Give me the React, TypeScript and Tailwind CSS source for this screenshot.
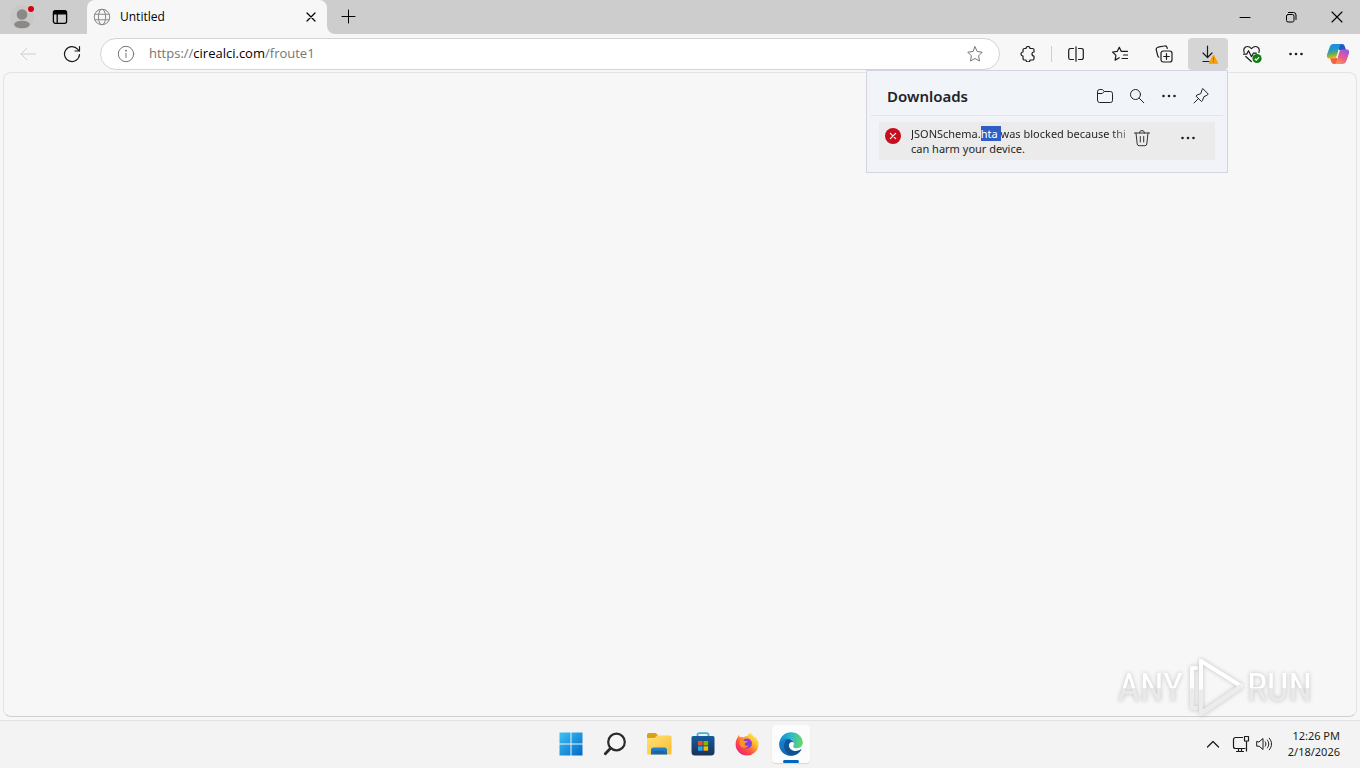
import React, { useState } from 'react';

type IconProps = { className?: string; children: React.ReactNode; box?: string; weight?: number };

function Icon({ className = 'size-4', children, box = '0 0 16 16', weight = 1 }: IconProps) {
  return (
    <svg
      aria-hidden="true"
      viewBox={box}
      className={`shrink-0 ${className}`}
      fill="none"
      stroke="currentColor"
      strokeWidth={weight}
      strokeLinecap="round"
      strokeLinejoin="round"
    >
      {children}
    </svg>
  );
}

function Dots({ className = 'size-4' }: { className?: string }) {
  return (
    <svg aria-hidden="true" viewBox="0 0 16 16" className={`shrink-0 ${className}`} fill="currentColor">
      <circle cx="2.5" cy="8" r="1.3" />
      <circle cx="8" cy="8" r="1.3" />
      <circle cx="13.5" cy="8" r="1.3" />
    </svg>
  );
}

function ToolButton({ label, children, className = 'w-10' }: { label: string; children: React.ReactNode; className?: string }) {
  return (
    <button type="button" aria-label={label} className={`flex h-8 shrink-0 items-center justify-center rounded ${className}`}>
      {children}
    </button>
  );
}

function TabStrip() {
  return (
    <header className="flex h-[34px] shrink-0 items-stretch bg-[#cdcdcd]">
      <button type="button" aria-label="Profile" className="flex w-11 items-center justify-center">
        <svg aria-hidden="true" viewBox="0 0 24 24" className="size-6">
          <circle cx="12" cy="12" r="12" fill="#c9c8c7" />
          <circle cx="12" cy="9.5" r="5.3" fill="#8b8887" />
          <ellipse cx="12" cy="19.5" rx="7.8" ry="3.8" fill="#8b8887" />
          <circle cx="21" cy="4" r="3.9" fill="#d6cccc" />
          <circle cx="21" cy="4" r="3" fill="#d3000f" />
        </svg>
      </button>
      <button type="button" aria-label="Tab actions" className="flex w-8 items-center justify-center text-black">
        <Icon className="size-4" weight={1.3}>
          <rect x="1.4" y="1.7" width="13.2" height="12.6" rx="2" />
          <path d="M2 2.5h12v2.3H2z" fill="currentColor" />
          <path d="M5.2 5v9" />
        </Icon>
      </button>
      <div className="flex w-[17px] items-end justify-end">
        <svg aria-hidden="true" viewBox="0 0 8 8" className="size-2">
          <path d="M8 0v8H0a8 8 0 0 0 8-8z" fill="#f7f7f7" />
        </svg>
      </div>
      <div className="-ml-1.5 flex w-60 items-center rounded-t-lg bg-[#f7f7f7] pl-1.5 pr-2">
        <Icon className="size-[18px] text-[#8a8a8a]" weight={0.9}>
          <circle cx="8" cy="8" r="6.9" />
          <ellipse cx="8" cy="8" rx="3.2" ry="6.9" />
          <path d="M1.7 5.5h12.6M1.7 10.5h12.6" />
        </Icon>
        <span className="ml-[9px] flex-1 font-['Open_Sans'] text-xs text-black">Untitled</span>
        <button type="button" aria-label="Close tab" className="flex size-4 items-center justify-center text-black">
          <Icon className="size-2.5" weight={1.2} box="0 0 10 10">
            <path d="M1 1l8 8M9 1l-8 8" />
          </Icon>
        </button>
      </div>
      <div className="flex items-end">
        <svg aria-hidden="true" viewBox="0 0 8 8" className="size-2">
          <path d="M0 0v8h8a8 8 0 0 1-8-8z" fill="#f7f7f7" />
        </svg>
      </div>
      <button type="button" aria-label="New tab" className="flex w-7 items-center justify-center text-black">
        <Icon className="size-4" weight={1}>
          <path d="M7.5 1v13M1 7.5h13" />
        </Icon>
      </button>
      <div className="flex-1" />
      <button type="button" aria-label="Minimize" className="flex w-[46px] items-center justify-center text-black">
        <Icon className="size-3" box="0 0 12 12">
          <path d="M1 6.5h10" />
        </Icon>
      </button>
      <button type="button" aria-label="Restore" className="flex w-[46px] items-center justify-center text-black">
        <Icon className="size-3" box="0 0 12 12">
          <rect x="1.5" y="3.5" width="7.5" height="7.5" rx="1.6" />
          <path d="M3.5 1.5h5a2.5 2.5 0 0 1 2.5 2.5v4.5" />
        </Icon>
      </button>
      <button type="button" aria-label="Close" className="flex w-[46px] items-center justify-center text-black">
        <Icon className="size-3" box="0 0 12 12" weight={1.1}>
          <path d="M1 1l10 10M11 1L1 11" />
        </Icon>
      </button>
    </header>
  );
}

function DownloadsPanel() {
  return (
    <section
      aria-label="Downloads"
      className="absolute right-0 top-full z-10 w-[362px] border border-[#d3d4e0] bg-[#f2f3f8] px-1 pb-3"
    >
      <div className="flex h-[45px] items-center border-b border-[#e3e5ec] bg-[#f1f4f8] pl-4 pr-1.5 pt-1.5 text-[#1f2329]">
        <h2 className="flex-1 text-[15px] font-semibold">Downloads</h2>
        <ToolButton label="Open downloads folder" className="w-8">
          <Icon className="size-[18px]" box="0 0 18 18">
            <path d="M1.5 4.5a2 2 0 0 1 2-2h2.8l2 2h6.2a2 2 0 0 1 2 2v7a2 2 0 0 1-2 2h-11a2 2 0 0 1-2-2zM1.5 6.5h4.8l2-2" />
          </Icon>
        </ToolButton>
        <ToolButton label="Search downloads" className="w-8">
          <Icon>
            <circle cx="6.5" cy="6.5" r="5" />
            <path d="M10.2 10.2l4.6 4.6" />
          </Icon>
        </ToolButton>
        <ToolButton label="More options" className="w-8">
          <Dots />
        </ToolButton>
        <ToolButton label="Pin downloads" className="w-8">
          <Icon>
            <path d="M10 .8l5.2 5.2-1 1.2-3.3 1.5-1.5 4-1 .8-5.4-5.4.8-1 4-1.5L9 2z" />
            <path d="M5.5 10.5L1 15" />
          </Icon>
        </ToolButton>
      </div>
      <div className="mx-2 mt-1.5 flex h-[38px] items-start bg-[#ebebeb] pl-1.5">
        <svg aria-hidden="true" viewBox="0 0 16 16" className="mt-1.5 size-4 shrink-0">
          <circle cx="8" cy="8" r="8" fill="#c50f1f" />
          <path d="M5.3 5.3l5.4 5.4M10.7 5.3l-5.4 5.4" stroke="#fff" strokeWidth="1.1" strokeLinecap="round" />
        </svg>
        <p className="ml-2.5 mt-1 w-[221px] whitespace-nowrap text-[11px] leading-[15px] text-[#1f1f1f]">
          <span className="block bg-linear-to-r from-[#1f1f1f] from-90% to-[#b0b0b0] bg-clip-text text-transparent">
            JSONSchema.<mark className="bg-[#2f5fc4] text-white">hta </mark>was blocked because thi
          </span>
          <span className="block">can harm your device.</span>
        </p>
        <button type="button" aria-label="Delete file" className="mt-1.5 flex h-5 w-5 items-center justify-center text-[#333]">
          <Icon className="size-[18px]" box="0 0 18 18">
            <path d="M1.5 4h15M6.5 4a2.5 2.5 0 0 1 5 0M3 4l1.2 11a2 2 0 0 0 2 1.7h5.6a2 2 0 0 0 2-1.7L15 4M7.3 7.5v5.5M10.7 7.5v5.5" />
          </Icon>
        </button>
        <button type="button" aria-label="More actions" className="ml-7 mt-2 flex size-4 items-center justify-center text-[#222]">
          <Dots className="size-4" />
        </button>
      </div>
    </section>
  );
}

function AddressField() {
  const [editing, setEditing] = useState(false);
  const [host, setHost] = useState({ scheme: 'https://', name: 'cirealci.com', path: '/froute1' });
  const [draft, setDraft] = useState('');

  function begin() {
    setDraft(host.scheme + host.name + host.path);
    setEditing(true);
  }

  function finish() {
    const parts = /^(https?:\/\/)?([^/]*)(.*)$/.exec(draft);
    if (parts) setHost({ scheme: parts[1] ?? 'https://', name: parts[2], path: parts[3] });
    setEditing(false);
  }

  return (
    <div className="relative ml-3.5 flex flex-1 items-center font-['Open_Sans'] text-[13px] text-[#757575]">
      <label htmlFor="address" className={editing ? 'invisible' : ''}>
        {host.scheme}
        <span className="text-black">{host.name}</span>
        {host.path}
      </label>
      <input
        id="address"
        type="text"
        value={editing ? draft : ''}
        onFocus={begin}
        onBlur={finish}
        onChange={(e) => setDraft(e.target.value)}
        className="absolute inset-0 w-full bg-transparent text-black outline-none"
      />
    </div>
  );
}

function Toolbar() {
  return (
    <div className="flex h-[38px] shrink-0 items-center gap-1 bg-[#f7f7f7] pl-2 pr-2.5 pt-0.5 text-[#1b1b1b]">
      <ToolButton label="Back">
        <Icon className="size-4 text-[#cfcfcf]">
          <path d="M15.5 8H1M7 2L1 8l6 6" />
        </Icon>
      </ToolButton>
      <ToolButton label="Refresh">
        <Icon className="size-[18px]" box="0 0 18 18" weight={1.2}>
          <path d="M16.5 9.5a7.5 7.5 0 1 1-1.7-5.2L16.3 6M16.5 1.5V6H12" />
        </Icon>
      </ToolButton>
      <div className="ml-1 flex h-8 flex-1 items-center rounded-full border border-[#d4d4d4] bg-white px-4">
        <button type="button" aria-label="View site information" className="text-[#757575]">
          <Icon className="size-[18px]" box="0 0 18 18">
            <circle cx="9" cy="9" r="7.7" />
            <path d="M9 8.2v4.3" />
            <circle cx="9" cy="5.7" r="0.5" fill="currentColor" />
          </Icon>
        </button>
        <AddressField />
        <button type="button" aria-label="Add to favorites" className="text-[#757575]">
          <Icon className="size-4">
            <path d="M8 .8l2.2 4.7 5 .7-3.600 3.600.9 5.200L8 12.500 3.500 15l.9-5.200L.8 6.200l5-.7z" />
          </Icon>
        </button>
      </div>
      <ToolButton label="Extensions" className="ml-1 w-10">
        <Icon weight={1.2}>
          <path d="M4.500 2.500H6a2 2 0 0 1 4 0h2.500a1.500 1.500 0 0 1 1.500 1.500v2a2 2 0 1 0 0 4v2.500a1.500 1.500 0 0 1-1.500 1.500H10a2 2 0 0 1-4 0H4.500A1.500 1.500 0 0 1 3 12.500V10a2 2 0 0 1 0-4V4a1.500 1.500 0 0 1 1.500-1.500" />
        </Icon>
      </ToolButton>
      <div className="-ml-px h-4 w-px bg-[#d0d0d0]" />
      <ToolButton label="Split screen" className="w-[39px]">
        <Icon weight={1.2}>
          <path d="M8 .8v14.400M5.500 2.500H2.500A1.800 1.800 0 0 0 .7 4.300v7.400a1.800 1.800 0 0 0 1.800 1.800h3M10.500 2.500h3a1.800 1.800 0 0 1 1.800 1.800v7.400a1.800 1.800 0 0 1-1.800 1.800h-3" />
        </Icon>
      </ToolButton>
      <ToolButton label="Favorites" className="ml-px w-10">
        <Icon weight={1.2}>
          <path d="M9.200 5.300h6.300M11.500 9h4M10 12.500h5.500M9.200 5.300L7.300 1.200 5.200 5.400.6 6l3.300 3.300-.8 4.800 4.200-2.300" />
        </Icon>
      </ToolButton>
      <ToolButton label="Collections">
        <Icon className="size-[18px]" box="0 0 18 18" weight={1.2}>
          <rect x="6" y="6" width="11" height="11" rx="2.2" />
          <path d="M11.500 8.700v5.600M8.700 11.500h5.600M3.800 12.200A2.500 2.500 0 0 1 2.700 10.500L1.300 5.200A2.500 2.500 0 0 1 3 2.200L9.200 1a2.500 2.500 0 0 1 3 1.800v.7" />
        </Icon>
      </ToolButton>
      <div className="relative">
        <ToolButton label="Downloads" className="w-10 bg-[#d5d5d5]">
          <svg aria-hidden="true" viewBox="0 0 20 20" className="size-5" fill="none">
            <path d="M9.500 2v11.500M5 9l4.500 4.500L14 9M5 17.500h6" stroke="#1b1b1b" strokeWidth="1.2" strokeLinecap="round" strokeLinejoin="round" />
            <path d="M15.500 11l4.300 8.300h-8.600z" fill="#f79f0a" stroke="#f79f0a" strokeLinejoin="round" />
            <path d="M15.500 13.500v3M15.500 17.700v.8" stroke="#a86b00" strokeWidth="1" />
          </svg>
        </ToolButton>
        <DownloadsPanel />
      </div>
      <ToolButton label="Browser essentials">
        <svg aria-hidden="true" viewBox="0 0 20 20" className="size-5" fill="none">
          <path
            d="M2.200 8.500C.8 5.600 2.500 2.500 5.500 2.500c1.700 0 2.700.8 4 2.200 1.300-1.400 2.300-2.200 4-2.200 3 0 4.700 3 3.400 6M1.500 10.200h3.200l1.800-3.500 3 6 1.800-3.500h3M3.800 12.500l5.500 5"
            stroke="#1b1b1b"
            strokeWidth="1.2"
            strokeLinecap="round"
            strokeLinejoin="round"
          />
          <circle cx="15" cy="14.500" r="4.600" fill="#107c10" />
          <path d="M12.800 14.700l1.500 1.400 2.800-3" stroke="#fff" strokeWidth="1.2" />
        </svg>
      </ToolButton>
      <ToolButton label="Settings and more">
        <Dots className="size-4" />
      </ToolButton>
      <ToolButton label="Copilot" className="-mr-1.5 w-9">
        <svg aria-hidden="true" viewBox="0 0 24 22" className="h-[22px] w-6">
          <defs>
            <linearGradient id="cpBlue" x1="0" y1="0" x2="0.2" y2="1">
              <stop offset="0" stopColor="#168ee8" />
              <stop offset="0.45" stopColor="#2796c5" />
              <stop offset="0.7" stopColor="#55ad65" />
              <stop offset="1" stopColor="#efb51c" />
            </linearGradient>
            <linearGradient id="cpPink" x1="0.7" y1="0" x2="0.2" y2="1">
              <stop offset="0" stopColor="#a055e0" />
              <stop offset="0.5" stopColor="#e65b91" />
              <stop offset="1" stopColor="#ff9850" />
            </linearGradient>
          </defs>
          <path d="M13 1h3c2 0 2.500 1.500 3 3l1 3h-7z" fill="#2259c8" />
          <path d="M11 21H8c-2 0-2.500-1.500-3-3l-1-3h7z" fill="#f0633e" />
          <path d="M7.500 1H16c-1.500 0-2 1-2.400 2.300L10.700 13c-.6 1.800-1.400 2.500-3 2.500H3.500C1 15.500.5 13.500 1.200 11L3.700 4C4.400 2 5.500 1 7.500 1z" fill="url(#cpBlue)" />
          <path d="M16.500 21H8c1.500 0 2-1 2.400-2.300L13.300 9c.6-1.800 1.400-2.500 3-2.500h4.200c2.500 0 3 2 2.300 4.500L20.300 18c-.7 2-1.800 3-3.800 3z" fill="url(#cpPink)" />
        </svg>
      </ToolButton>
    </div>
  );
}

function WatermarkWord({ children }: { children: string }) {
  return (
    <span className="bg-linear-to-b from-white from-50% to-[#e9e9e9] to-50% bg-clip-text text-transparent drop-shadow-[0_0_2px_#c0c0c0]">
      {children}
    </span>
  );
}

function Watermark() {
  return (
    <div className="pointer-events-none absolute bottom-12 right-12 z-10 flex items-center font-['Roboto_Condensed','Roboto',sans-serif] text-[38px] leading-[60px]">
      <WatermarkWord>ANY</WatermarkWord>
      <svg
        aria-hidden="true"
        viewBox="0 0 60 64"
        className="mx-0.5 h-16 w-[60px] drop-shadow-[0_0_2px_#c0c0c0]"
        fill="none"
        strokeLinecap="round"
        strokeLinejoin="round"
      >
        <path d="M11 12H7v22M16 5v30" stroke="#fdfdfd" strokeWidth="4" />
        <path d="M7 34v18h4M16 35v22" stroke="#ececec" strokeWidth="4" />
        <path d="M16 5l40 25" stroke="#ffffff" strokeWidth="4" />
        <path d="M55 31L17 57" stroke="#ececec" strokeWidth="5" />
      </svg>
      <WatermarkWord>RUN</WatermarkWord>
    </div>
  );
}

function TaskButton({ label, active = false, children }: { label: string; active?: boolean; children: React.ReactNode }) {
  return (
    <button
      type="button"
      aria-label={label}
      className={`relative flex h-[38px] w-[38px] items-center justify-center rounded ${active ? 'bg-[#fcfcfc] shadow-[0_1px_1px_#d8d8d8]' : ''}`}
    >
      {children}
      {active && <span className="absolute bottom-0 h-[3px] w-4 rounded-full bg-[#0067c0]" />}
    </button>
  );
}

function Taskbar() {
  return (
    <footer className="grid h-12 shrink-0 grid-cols-[1fr_auto_1fr] items-center border-t border-[#e2e2e2] bg-[#f3f3f3] pb-0.5">
      <div />
      <nav aria-label="Taskbar" className="flex gap-1.5 pl-0.5">
        <TaskButton label="Start">
          <svg aria-hidden="true" viewBox="0 0 24 24" className="size-6">
            <defs>
              <linearGradient id="win" x1="0" y1="0" x2="24" y2="24" gradientUnits="userSpaceOnUse">
                <stop offset="0" stopColor="#40c4f5" />
                <stop offset="1" stopColor="#0067c5" />
              </linearGradient>
            </defs>
            <path d="M.5 .5h11v11H.5zM12.500 .5h11v11h-11zM.5 12.500h11v11H.5zM12.500 12.500h11v11h-11z" fill="url(#win)" />
          </svg>
        </TaskButton>
        <TaskButton label="Search">
          <svg aria-hidden="true" viewBox="0 0 24 24" className="size-6" fill="none" stroke="#2b2b2b">
            <circle cx="13.500" cy="10" r="8.300" strokeWidth="2.2" fill="#f6f6f6" />
            <path d="M7.300 16.500L2.300 21.800" strokeWidth="2.8" strokeLinecap="round" />
          </svg>
        </TaskButton>
        <TaskButton label="File Explorer">
          <svg aria-hidden="true" viewBox="0 0 26 24" className="h-6 w-[26px]">
            <defs>
              <linearGradient id="fold" x1="0" y1="0" x2="1" y2="1">
                <stop offset="0" stopColor="#ffe27a" />
                <stop offset="1" stopColor="#f9bd2d" />
              </linearGradient>
              <linearGradient id="tray" x1="0" y1="0" x2="0" y2="1">
                <stop offset="0" stopColor="#2585cf" />
                <stop offset="1" stopColor="#1265ac" />
              </linearGradient>
            </defs>
            <path d="M1 3a2 2 0 0 1 2-2h6c1 0 1.500.5 2.200 1.500L12 4l-3 3H1z" fill="#dba116" />
            <path d="M1 6h7.500l3-2.500H24A1.500 1.500 0 0 1 25.500 5v16a1.500 1.500 0 0 1-1.500 1.500H2.500A1.500 1.500 0 0 1 1 21z" fill="url(#fold)" />
            <path d="M5 22.500V18a2.500 2.500 0 0 1 2.500-2.500h11A2.500 2.500 0 0 1 21 18v4.500z" fill="url(#tray)" />
            <path d="M8.500 20h9" stroke="#1260a5" strokeWidth="1.3" strokeLinecap="round" />
          </svg>
        </TaskButton>
        <TaskButton label="Microsoft Store">
          <svg aria-hidden="true" viewBox="0 0 24 24" className="size-6">
            <defs>
              <linearGradient id="store" x1="0" y1="0" x2="0" y2="1">
                <stop offset="0" stopColor="#155d9e" />
                <stop offset="1" stopColor="#1b3154" />
              </linearGradient>
            </defs>
            <path d="M6.500 5V3A1.800 1.800 0 0 1 8.300 1.200h7.400A1.800 1.800 0 0 1 17.500 3v2" fill="none" stroke="#39b4e8" strokeWidth="1.8" />
            <path d="M.5 5.500A1.500 1.500 0 0 1 2 4h20a1.500 1.500 0 0 1 1.500 1.500V20a3.500 3.500 0 0 1-3.500 3.500H4A3.500 3.500 0 0 1 .5 20z" fill="url(#store)" />
            <path d="M7 9h4.600v4.400H7z" fill="#f25022" />
            <path d="M12.500 9h4.600v4.400h-4.600z" fill="#7fba00" />
            <path d="M7 14.300h4.600v4.400H7z" fill="#28a8ea" />
            <path d="M12.500 14.300h4.600v4.400h-4.600z" fill="#ffb900" />
          </svg>
        </TaskButton>
        <TaskButton label="Firefox">
          <svg aria-hidden="true" viewBox="0 0 24 24" className="size-6">
            <defs>
              <linearGradient id="fox" x1="0.85" y1="0.1" x2="0.15" y2="0.9">
                <stop offset="0" stopColor="#fff04a" />
                <stop offset="0.35" stopColor="#ffb02e" />
                <stop offset="0.65" stopColor="#ff5340" />
                <stop offset="1" stopColor="#ef1f74" />
              </linearGradient>
              <linearGradient id="globe" x1="0.8" y1="0" x2="0.2" y2="1">
                <stop offset="0" stopColor="#a33cd0" />
                <stop offset="1" stopColor="#5b4be0" />
              </linearGradient>
            </defs>
            <path d="M15.500.5c1 2 2.500 2.700 3.800 4.700l.7-.8c2.200 2.200 3.500 5 3.500 8.100A11.300 11.300 0 0 1 12 23.500 11.300 11.300 0 0 1 .6 12.300c0-3 1-5.500 2.200-7 .2-1 .4-1.700 1-2.300.2 1 .6 1.700 1.200 2.200 1.200-.4 2.500-.4 3.700.1 1-1 2.300-1.500 3.500-1.600C12.500 3 14 2.500 15.500.5z" fill="url(#fox)" />
            <circle cx="12" cy="11.500" r="5" fill="url(#globe)" />
            <path d="M4.500 8c2-1.200 4-.5 5 1l3 .3c0 1-2 1.600-2.700 2.200-.6 2 1.500 2.800 3.700 2-1 2.500-5 3.300-7.500 1-1.800-1.700-2-4.500-1.500-6.500z" fill="#ff9130" />
          </svg>
        </TaskButton>
        <TaskButton label="Microsoft Edge" active>
          <svg aria-hidden="true" viewBox="0 0 24 24" className="size-6">
            <defs>
              <linearGradient id="edgeTop" x1="0" y1="0.4" x2="1" y2="0.5">
                <stop offset="0" stopColor="#1689d8" />
                <stop offset="0.45" stopColor="#2bb8ce" />
                <stop offset="1" stopColor="#68d865" />
              </linearGradient>
              <linearGradient id="edgeLow" x1="0" y1="0.2" x2="0.8" y2="1">
                <stop offset="0" stopColor="#1683cf" />
                <stop offset="1" stopColor="#0c59a4" />
              </linearGradient>
            </defs>
            <path d="M.3 11C1 4.700 6 .2 12 .2c7 0 11.800 5 11.800 10.300 0 3.500-2.700 5.700-5.700 5.700-2.500 0-4-.9-4-1.800 0-.8 1-1 1-2.900 0-2.300-2-4.500-5-4.500C5.500 7 1.500 9.500.3 14z" fill="url(#edgeTop)" />
            <path d="M.2 12C.5 8.500 5 6.500 9.500 6.800c3 .2 5.600 2.200 5.600 4.700 0-2-4.800-2.500-5.200 1.500-.3 3.800 3.600 6.500 7.300 6 2-.3 3.600-1 4.500-1.600.6-.4 1 0 .5.700A11.800 11.800 0 0 1 12 23.800C5.500 23.800-.2 18.500.2 12z" fill="url(#edgeLow)" />
            <path d="M9 7c-3.500 2-4.500 6-3.500 9.500 1 3.700 4 6.300 7.500 7.200 3.700-.3 6.800-2.300 8.800-5.100.5-.7 0-1.100-.5-.8-1 .6-2.500 1.200-4.100 1.200-3.700.5-7.600-2.200-7.300-6 .1-2.300 1.500-3.300 2.500-3.500C11.500 8.200 10.500 7.200 9 7z" fill="#114a8b" opacity="0.75" />
          </svg>
        </TaskButton>
      </nav>
      <div className="flex items-center justify-end pr-5 text-[#1b1b1b]">
        <button type="button" aria-label="Show hidden icons" className="mr-3">
          <Icon className="size-3.5" box="0 0 14 14" weight={1.3}>
            <path d="M1.500 10L7 4.500l5.500 5.500" />
          </Icon>
        </button>
        <button type="button" aria-label="Network and volume" className="mr-4 flex items-center gap-1.5">
          <Icon className="size-[18px]" box="0 0 18 18" weight={1.2}>
            <path d="M10.500 2.500h-7a2 2 0 0 0-2 2v7a2 2 0 0 0 2 2h9.500M4.500 16.500h7M6.500 13.500v3M9.500 13.500v3M12.500 1.500h4v4.500h-4zM14.500 6v10" />
          </Icon>
          <Icon className="size-4" weight={1}>
            <path d="M.7 5.800v4.400h2.500L7 13.500v-11L3.200 5.800zM9.200 5.800c1 1.300 1 3.100 0 4.400M11.300 4c2 2.300 2 5.700 0 8M13.300 2.200c3 3.300 3 8.300 0 11.600" />
          </Icon>
        </button>
        <time dateTime="2026-02-18T12:26" className="text-right text-[11px] leading-4">
          12:26 PM
          <br />
          2/18/2026
        </time>
      </div>
    </footer>
  );
}

export default function App() {
  return (
    <div className="relative flex min-h-screen flex-col bg-[#f3f3f3] font-['Noto_Sans',sans-serif]">
      <TabStrip />
      <Toolbar />
      <div className="flex flex-1 bg-[#f7f7f7] px-[3px] pb-[3px]">
        <main aria-label="Untitled page" className="flex-1 rounded-lg border border-[#e3e3e3] border-b-[#cfcfcf] bg-[#f7f7f7]" />
      </div>
      <Taskbar />
      <Watermark />
    </div>
  );
}
